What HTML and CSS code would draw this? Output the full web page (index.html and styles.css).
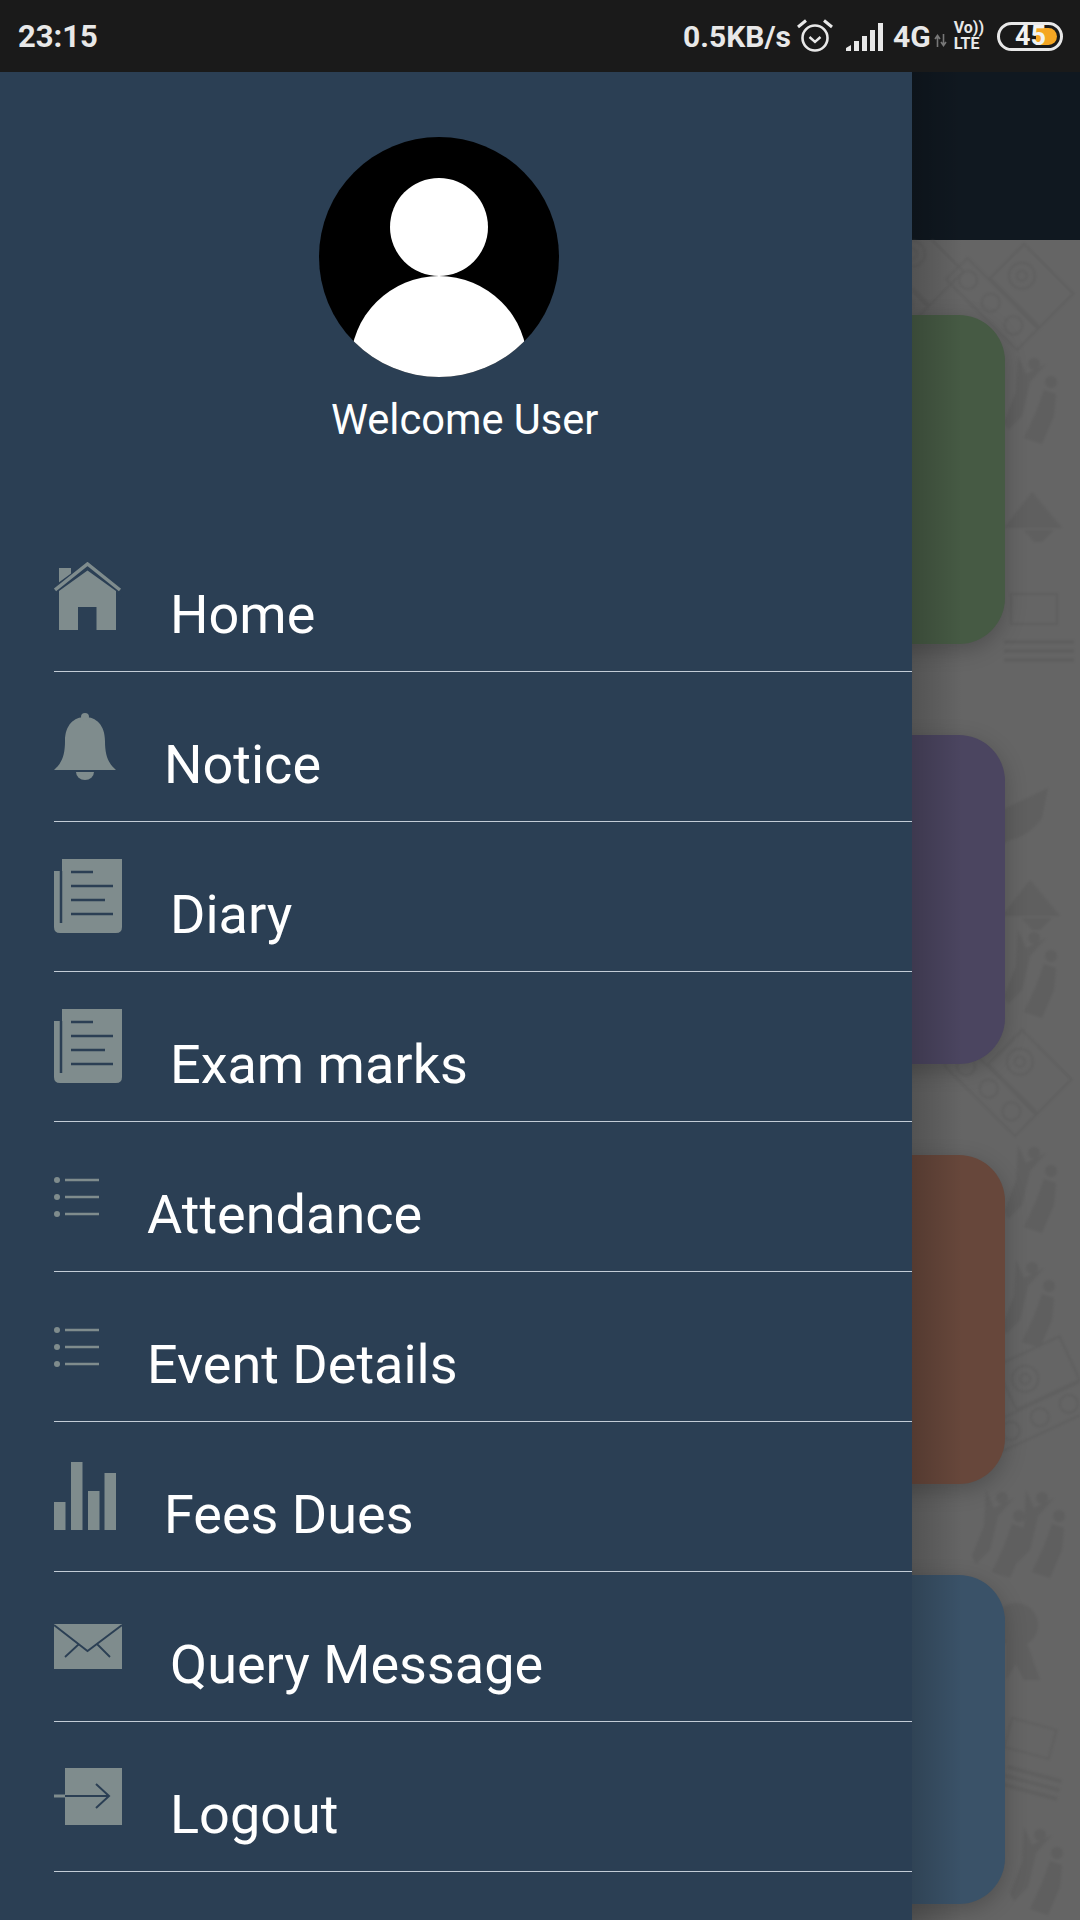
FILE: index.html
```html
<!DOCTYPE html>
<html lang="en">
<head>
  <meta charset="UTF-8">
  <meta name="viewport" content="width=device-width, initial-scale=1.0">
  <title>Menu</title>
  <link rel="stylesheet" href="styles.css">
</head>
<body>
  <div class="status-bar">
    <span class="clock">23:15</span>
    <div class="status-right">
      <span class="speed">0.5KB/s</span>
      <svg class="alarm-icon" viewBox="0 0 36 34" width="36" height="34">
        <circle cx="18" cy="19" r="12.5" fill="none" stroke="#e8e8e8" stroke-width="2.6"/>
        <path d="M12.5 18l5.5 5 5.5-5" fill="none" stroke="#e8e8e8" stroke-width="2.4"/>
        <path d="M1 8L9 1.5M35 8L27 1.5" fill="none" stroke="#e8e8e8" stroke-width="3"/>
      </svg>
      <svg class="signal-icon" viewBox="0 0 40 28" width="40" height="28">
        <path d="M0 28v-3l5-3v6zM8 28v-10h5v10zM16 28v-15h5v15zM24 28v-21h5v21zM32 28v-28h5v28z" fill="#e8e8e8"/>
      </svg>
      <span class="network">4G</span>
      <svg class="arrows-icon" viewBox="0 0 13 13" width="13" height="13">
        <path d="M3.5 13V2M1 5l2.500-3.500L6 5M9.500 0v11M7 8l2.500 3.500L12 8" fill="none" stroke="#777" stroke-width="1.600"/>
      </svg>
      <div class="volte"><span>Vo))</span><span>LTE</span></div>
      <div class="battery">
        <div class="battery-fill"></div>
        <span class="battery-text">45</span>
      </div>
    </div>
  </div>

  <div class="screen">
    <div class="drawer">
      <div class="drawer-header">
        <svg class="avatar" viewBox="0 0 240 240" width="240" height="240">
          <defs><clipPath id="avatar-clip"><circle cx="120" cy="120" r="120"/></clipPath></defs>
          <circle cx="120" cy="120" r="120" fill="#000"/>
          <circle cx="120" cy="90" r="49" fill="#fff"/>
          <circle cx="120" cy="227.500" r="88.500" fill="#fff" clip-path="url(#avatar-clip)"/>
        </svg>
        <div class="welcome">Welcome User</div>
      </div>

      <ul class="menu">
        <li class="menu-item">
          <svg class="icon icon-home" viewBox="0 0 68 68" width="68" height="68">
            <path d="M5 6h12v16H5z" fill="#7f8c8d"/>
            <path d="M-2 31L33.500 5 69 31" fill="none" stroke="#2b3f54" stroke-width="9"/>
            <path d="M1 28L33.500 2 66 28" fill="none" stroke="#7f8c8d" stroke-width="3.500"/>
            <path fill-rule="evenodd" d="M5 68V29L33.500 8.500 62 29v39zM24 68h18.500V45H24z" fill="#7f8c8d"/>
          </svg>
          <span class="menu-label">Home</span>
        </li>
        <li class="menu-item">
          <svg class="icon icon-bell" viewBox="0 0 62 67" width="62" height="67">
            <path d="M0 57C8 50 11 42 11 28 11 12 20 4 31 4s20 8 20 24c0 14 3 22 11 29z" fill="#7f8c8d"/>
            <circle cx="31" cy="4" r="4" fill="#7f8c8d"/>
            <path d="M22 59h18a9 8 0 0 1-18 0z" fill="#7f8c8d"/>
          </svg>
          <span class="menu-label">Notice</span>
        </li>
        <li class="menu-item">
          <svg class="icon icon-paper" viewBox="0 0 68 74" width="68" height="74"><use href="#paper"/></svg>
          <span class="menu-label">Diary</span>
        </li>
        <li class="menu-item">
          <svg class="icon icon-paper" viewBox="0 0 68 74" width="68" height="74"><use href="#paper"/></svg>
          <span class="menu-label">Exam marks</span>
        </li>
        <li class="menu-item">
          <svg class="icon icon-list" viewBox="0 0 46 40" width="46" height="40"><use href="#list"/></svg>
          <span class="menu-label">Attendance</span>
        </li>
        <li class="menu-item">
          <svg class="icon icon-list" viewBox="0 0 46 40" width="46" height="40"><use href="#list"/></svg>
          <span class="menu-label">Event Details</span>
        </li>
        <li class="menu-item">
          <svg class="icon icon-bars" viewBox="0 0 62 68" width="62" height="68">
            <path d="M0 40h11.500v28H0zM17 0h11.500v68H17zM34 29h11.500v39H34zM50.500 11H62v57H50.500z" fill="#7f8c8d"/>
          </svg>
          <span class="menu-label">Fees Dues</span>
        </li>
        <li class="menu-item">
          <svg class="icon icon-mail" viewBox="0 0 68 45" width="68" height="45">
            <path d="M0 0h68v45H0z" fill="#7f8c8d"/>
            <path d="M0 1l33.500 26L68 1M11 33l14-13M56 33L43 20" fill="none" stroke="#2b3f54" stroke-width="1.800"/>
          </svg>
          <span class="menu-label">Query Message</span>
        </li>
        <li class="menu-item">
          <svg class="icon icon-logout" viewBox="0 0 68 57" width="68" height="57">
            <path d="M11 0h57v57H11zM0 26.500h11v3H0z" fill="#7f8c8d"/>
            <path d="M11 28h44M42 16l13 12-13 12" fill="none" stroke="#2b3f54" stroke-width="2"/>
          </svg>
          <span class="menu-label">Logout</span>
        </li>
      </ul>
    </div>

    <div class="behind">
      <div class="app-bar"></div>
      <div class="dashboard">
        <svg class="doodles" viewBox="0 0 168 1680" width="168" height="1680">
          <defs>
            <g id="board" fill="none" stroke="#5a5a5a" stroke-width="2">
              <rect x="0" y="0" width="70" height="48"/>
              <circle cx="21" cy="24" r="13"/>
              <circle cx="21" cy="24" r="5"/>
              <rect x="-30" y="50" width="100" height="30"/>
              <circle cx="-14" cy="65" r="9"/>
              <circle cx="18" cy="65" r="9"/>
              <circle cx="50" cy="65" r="9"/>
            </g>
            <g id="people" fill="#5a5a5a">
              <circle cx="30" cy="8" r="6"/>
              <path d="M14 0l8 18 20-10-16 18-8 34-14 14-4-8 12-30z"/>
              <circle cx="47" cy="26" r="6"/>
              <path d="M40 34l12 4-2 22-12 28-18-6 12-26z"/>
            </g>
            <g id="hat" fill="#5a5a5a">
              <path d="M0 36L28 0l30 36z"/>
              <path d="M20 38h30l-12 12h-8z"/>
            </g>
            <g id="slate" fill="none" stroke="#5a5a5a" stroke-width="2">
              <rect x="0" y="0" width="46" height="30"/>
            </g>
            <g id="dots" fill="#5a5a5a">
              <rect x="0" y="0" width="70" height="4"/>
              <rect x="0" y="9" width="70" height="4"/>
              <rect x="0" y="18" width="70" height="4"/>
            </g>
          </defs>
          <use href="#board" transform="translate(112 4) rotate(45)"/>
          <use href="#board" transform="translate(2 -18) rotate(45)"/>
          <use href="#people" transform="translate(92 116)"/>
          <use href="#hat" transform="translate(92 252)"/>
          <use href="#slate" transform="translate(99 354)"/>
          <use href="#dots" transform="translate(92 400)"/>
          <path d="M90 570l46-22-6 30c-10 14-22 20-32 22l-18 10z" fill="#5a5a5a"/>
          <use href="#hat" transform="translate(90 640)"/>
          <use href="#people" transform="translate(92 690)"/>
          <use href="#board" transform="translate(110 790) rotate(45)"/>
          <use href="#people" transform="translate(92 905)"/>
          <use href="#people" transform="translate(90 1020)"/>
          <use href="#board" transform="translate(84 1126) rotate(-25)"/>
          <use href="#people" transform="translate(60 1250)"/>
          <use href="#people" transform="translate(100 1250)"/>
          <circle cx="104" cy="1385" r="22" fill="#5a5a5a"/>
          <path d="M94 1400h20l14 40h-16l-8-16-10 16z" fill="#5a5a5a"/>
          <use href="#slate" transform="translate(100 1478) rotate(15)"/>
          <use href="#dots" transform="translate(96 1525) rotate(15) scale(.8 1)"/>
          <use href="#people" transform="translate(98 1587)"/>
        </svg>
        <div class="card card-green"></div>
        <div class="card card-purple"></div>
        <div class="card card-red"></div>
        <div class="card card-blue"></div>
      </div>
      <div class="drawer-shadow"></div>
    </div>
  </div>

  <svg class="icon-defs" width="0" height="0">
    <defs>
      <g id="paper">
        <path d="M8 0h60v68q0 6-6 6H6q-6 0-6-6V12h8z" fill="#7f8c8d"/>
        <path d="M7 12v52M17 13h22M17 27h42M17 41h34M17 55h42" fill="none" stroke="#2b3f54" stroke-width="2.500"/>
      </g>
      <g id="list">
        <circle cx="3" cy="3" r="3" fill="#7f8c8d"/>
        <circle cx="3" cy="20" r="3" fill="#7f8c8d"/>
        <circle cx="3" cy="37" r="3" fill="#7f8c8d"/>
        <path d="M11 3h34M11 20h34M11 37h34" fill="none" stroke="#7f8c8d" stroke-width="2.600"/>
      </g>
    </defs>
  </svg>
</body>
</html>
```

FILE: styles.css
```css
* {
  box-sizing: border-box;
}

html, body {
  margin: 0;
  padding: 0;
}

body {
  width: 1080px;
  height: 1920px;
  overflow: hidden;
  font-family: Roboto, "Liberation Sans", sans-serif;
  background-color: #666666;
  color: #ffffff;
}

.status-bar {
  display: flex;
  align-items: center;
  justify-content: space-between;
  height: 72px;
  padding: 0 17px 0 18px;
  background-color: #1a1a1a;
  color: #e8e8e8;
}

.clock {
  font-size: 31px;
  font-weight: 700;
}

.status-right {
  display: flex;
  align-items: center;
}

.speed {
  font-size: 30px;
  font-weight: 700;
}

.alarm-icon {
  margin-left: 6px;
}

.signal-icon {
  margin-left: 13px;
  margin-top: 1px;
}

.network {
  margin-left: 7px;
  font-size: 30px;
  font-weight: 700;
}

.arrows-icon {
  margin-left: 3px;
  margin-top: 8px;
}

.volte {
  display: flex;
  flex-direction: column;
  margin-left: 7px;
  font-size: 16px;
  font-weight: 700;
  line-height: 16px;
}

.battery {
  position: relative;
  width: 66px;
  height: 29px;
  margin-left: 13px;
  border: 3px solid #e8e8e8;
  border-radius: 15px;
}

.battery-fill {
  position: absolute;
  top: 3px;
  right: 3px;
  width: 21px;
  height: 17px;
  border-radius: 0 9px 9px 0;
  background-color: #f5a623;
}

.battery-text {
  position: absolute;
  top: -5px;
  left: 15px;
  font-size: 27px;
  font-weight: 700;
  line-height: 32px;
  color: #f2f2f2;
}

.screen {
  display: flex;
  height: 1848px;
}

.drawer {
  flex: none;
  width: 912px;
  background-color: #2b3f54;
}

.drawer-header {
  display: flex;
  flex-direction: column;
  align-items: flex-start;
  height: 450px;
  padding-top: 65px;
}

.avatar {
  display: block;
  margin-left: 319px;
}

.welcome {
  margin: 19px 0 0 331px;
  font-size: 41.6px;
  line-height: 47px;
}

.menu {
  margin: 0 0 0 54px;
  padding: 0;
  list-style: none;
}

.menu-item {
  display: flex;
  align-items: flex-start;
  height: 150px;
  border-bottom: 1px solid #c3ccd6;
}

.icon {
  flex: none;
  display: block;
}

.icon-home { margin-top: 40px; }
.icon-bell { margin-top: 41px; }
.icon-paper { margin-top: 37px; }
.icon-list { margin-top: 55px; }
.icon-bars { margin-top: 40px; }
.icon-mail { margin-top: 52px; }
.icon-logout { margin-top: 46px; }

.menu-label {
  margin: 63px 0 0 48px;
  font-size: 54px;
  line-height: 60px;
}

.icon-list + .menu-label {
  margin-left: 47px;
}

.behind {
  position: relative;
  flex: 1;
  overflow: hidden;
}

.app-bar {
  height: 168px;
  background-color: #101820;
}

.dashboard {
  position: relative;
  display: flex;
  flex-direction: column;
  gap: 91px;
  height: 1680px;
  padding: 75px 75px 0 0;
  background-color: #656565;
}

.doodles {
  position: absolute;
  top: 0;
  left: 0;
  opacity: 0.5;
  filter: blur(1px);
}

.card {
  position: relative;
  flex: none;
  height: 329px;
  margin-left: -80px;
  border-radius: 46px;
  box-shadow: 0 6px 22px rgba(0, 0, 0, 0.22);
}

.card-green { background-color: #465a44; }
.card-purple { background-color: #4b4560; }
.card-red { background-color: #67473b; }
.card-blue { background-color: #3a5268; }

.drawer-shadow {
  position: absolute;
  top: 0;
  bottom: 0;
  left: 0;
  width: 50px;
  background: linear-gradient(to right, rgba(0, 0, 0, 0.18), rgba(0, 0, 0, 0));
}

.icon-defs {
  position: absolute;
}
```
